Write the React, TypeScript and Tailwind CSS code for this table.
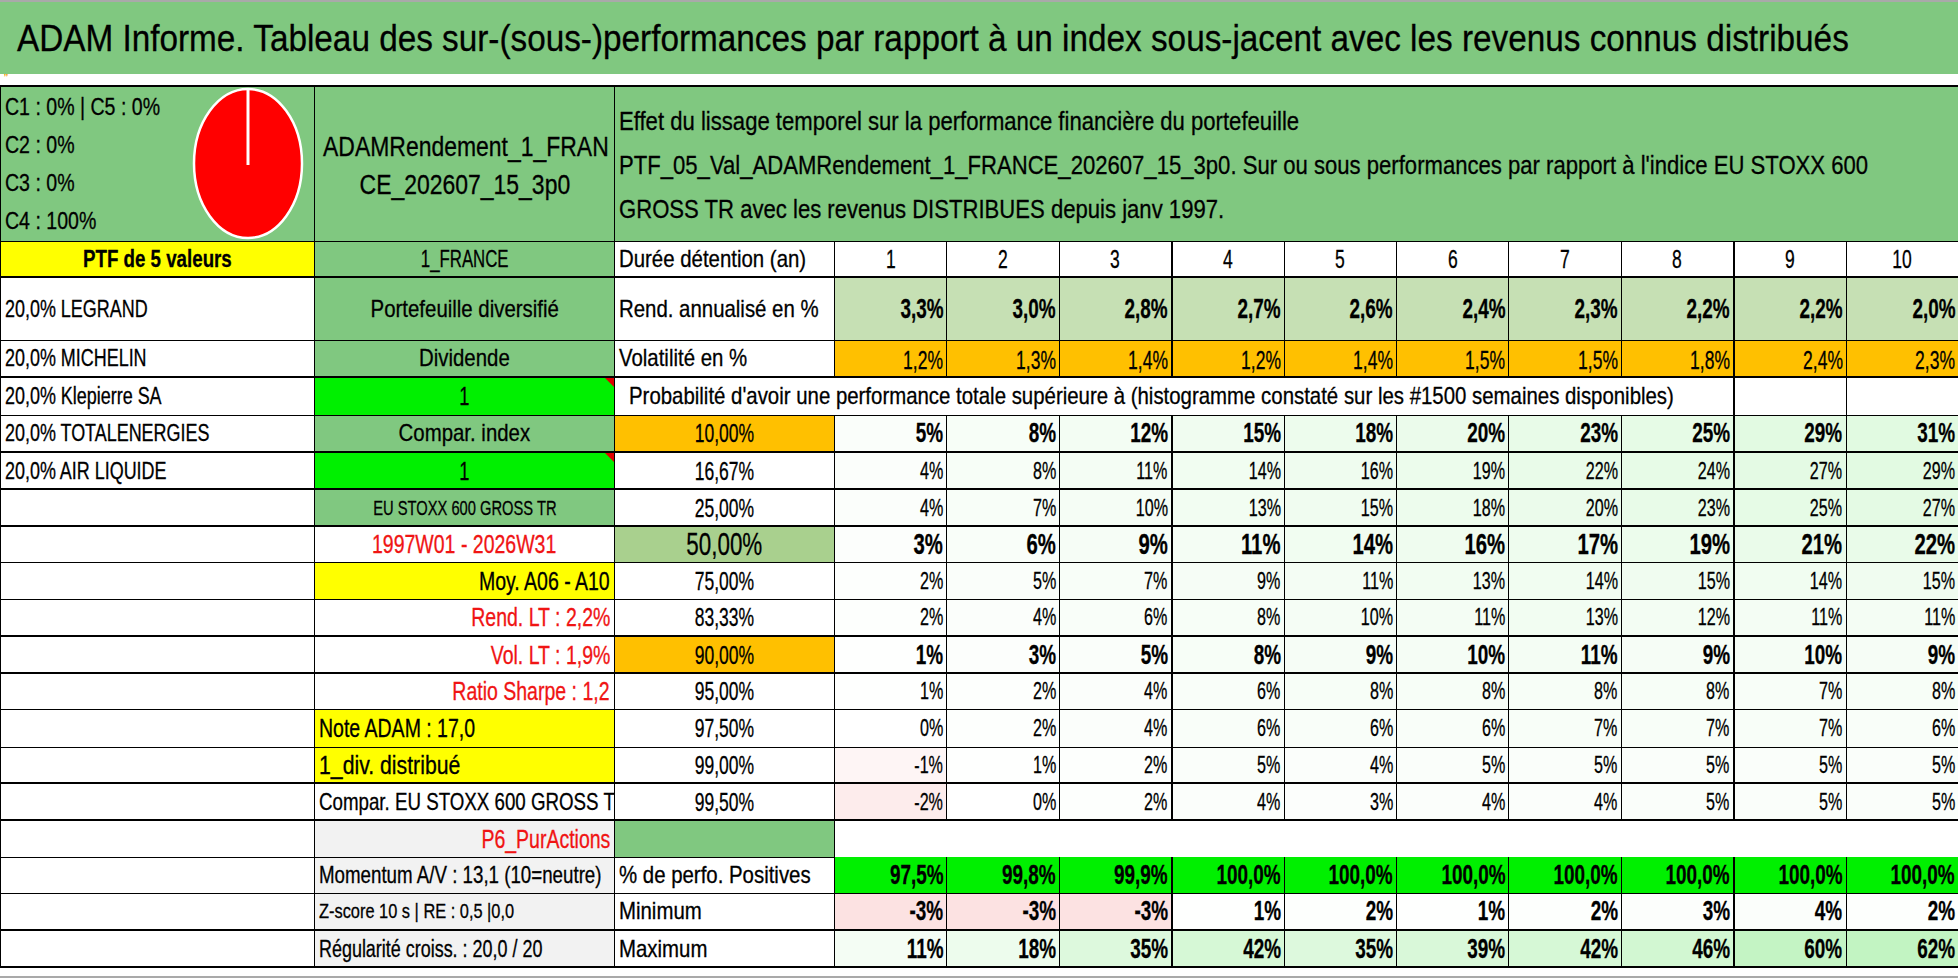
import React from "react";

const FONT = "[font-family:'Liberation_Sans','Arial',sans-serif]";

type Align = "l" | "c" | "r";
type Squeeze = "n" | "m" | "t" | "w";
const ALIGN: Record<Align, string> = { l: "text-left", c: "text-center", r: "text-right" };
const ORIGIN: Record<Align, string> = { l: "origin-left", c: "origin-center", r: "origin-right" };
// the sheet uses a narrow face (digits even narrower): squeeze Liberation Sans sideways
const SQUEEZE: Record<Squeeze, string> = {
  n: "scale-x-[0.7]",
  m: "scale-x-[0.78]",
  t: "scale-x-[0.85]",
  w: "scale-x-[0.9]",
};

function Txt({ align = "l", sc = "t", children }: { align?: Align; sc?: Squeeze; children?: React.ReactNode }) {
  return <span className={`inline-block ${SQUEEZE[sc]} ${ORIGIN[align]}`}>{children}</span>;
}

// colour scale used by the sheet's conditional formatting
function mix(t: number, to: number[]) {
  const c = to.map((v) => Math.round(255 + (v - 255) * t));
  return `rgb(${c[0]}, ${c[1]}, ${c[2]})`;
}

function scaleBg(v: number) {
  if (v < 0) return mix(Math.min(1, -v / 3), [252, 226, 226]);
  return mix(Math.min(1, v / 62), [194, 244, 194]);
}

interface TdProps {
  className?: string;
  inner?: string;
  align?: Align;
  sc?: Squeeze;
  colSpan?: number;
  flag?: boolean;
  style?: React.CSSProperties;
  children?: React.ReactNode;
}

function Td({ className = "", inner = "", align = "l", sc = "t", colSpan, flag, style, children }: TdProps) {
  return (
    <td colSpan={colSpan} style={style} className={`relative border border-black p-0 align-middle ${className}`}>
      {flag && <span className="absolute right-0 top-0 h-[9px] w-[9px] bg-[#e00000] [clip-path:polygon(0_0,100%_0,100%_100%)]" />}
      <div className={`overflow-hidden whitespace-nowrap px-[4px] leading-[30px] ${ALIGN[align]} ${inner}`}>
        {children !== undefined && (
          <Txt align={align} sc={sc}>
            {children}
          </Txt>
        )}
      </div>
    </td>
  );
}

const sep = (i: number) => (i === 3 || i === 8 ? "border-l-2" : "");

function ValueCells({ vals, weight, thick }: { vals: number[]; weight: string; thick?: boolean }) {
  return (
    <>
      {vals.map((v, i) => (
        <Td
          key={i}
          align="r"
          sc="n"
          style={{ backgroundColor: scaleBg(v) }}
          className={`${sep(i)} ${thick ? "border-b-2" : ""}`}
          inner={`pr-[3px] ${weight}`}
        >
          {`${v}%`}
        </Td>
      ))}
    </>
  );
}

interface ProbRow {
  h: string;
  thick?: boolean;
  a?: string;
  b: string;
  bCls: string;
  bInner: string;
  bAlign: Align;
  bSc: Squeeze;
  flag?: boolean;
  c: string;
  cCls?: string;
  cInner?: string;
  vals: number[];
  weight: string;
}

const GREEN = "bg-[#80c880]";
const BRIGHT = "bg-[#00f000]";
const YELLOW = "bg-[#ffff00]";
const ORANGE = "bg-[#ffc000]";
const RED = "text-[#f01414]";
const NORMAL = "text-[23px]";
const BOLD = "font-bold text-[27px]";

const probRows: ProbRow[] = [
  { h: "h-[37px]", thick: true, a: "20,0% TOTALENERGIES", b: "Compar. index", bCls: GREEN, bInner: "text-[24px]", bAlign: "c", bSc: "t", c: "10,00%", cCls: ORANGE, vals: [5, 8, 12, 15, 18, 20, 23, 25, 29, 31], weight: BOLD },
  { h: "h-[37px]", thick: true, a: "20,0% AIR LIQUIDE", b: "1", bCls: BRIGHT, bInner: "text-[26px]", bAlign: "c", bSc: "n", flag: true, c: "16,67%", vals: [4, 8, 11, 14, 16, 19, 22, 24, 27, 29], weight: NORMAL },
  { h: "h-[37px]", thick: true, b: "EU STOXX 600 GROSS TR", bCls: GREEN, bInner: "text-[21px]", bAlign: "c", bSc: "n", c: "25,00%", vals: [4, 7, 10, 13, 15, 18, 20, 23, 25, 27], weight: NORMAL },
  { h: "h-[36px]", b: "1997W01 - 2026W31", bCls: "", bInner: `text-[25px] ${RED}`, bAlign: "c", bSc: "m", c: "50,00%", cCls: "bg-[#a9d08e]", cInner: "text-[32px]", vals: [3, 6, 9, 11, 14, 16, 17, 19, 21, 22], weight: "font-bold text-[29px]" },
  { h: "h-[37px]", b: "Moy. A06 - A10", bCls: YELLOW, bInner: "text-[25px]", bAlign: "r", bSc: "m", c: "75,00%", vals: [2, 5, 7, 9, 11, 13, 14, 15, 14, 15], weight: NORMAL },
  { h: "h-[37px]", thick: true, b: "Rend. LT : 2,2%", bCls: "", bInner: `text-[25px] ${RED}`, bAlign: "r", bSc: "m", c: "83,33%", vals: [2, 4, 6, 8, 10, 11, 13, 12, 11, 11], weight: NORMAL },
  { h: "h-[37px]", thick: true, b: "Vol. LT : 1,9%", bCls: "", bInner: `text-[25px] ${RED}`, bAlign: "r", bSc: "m", c: "90,00%", cCls: ORANGE, vals: [1, 3, 5, 8, 9, 10, 11, 9, 10, 9], weight: BOLD },
  { h: "h-[36px]", b: "Ratio Sharpe : 1,2", bCls: "", bInner: `text-[25px] ${RED}`, bAlign: "r", bSc: "m", c: "95,00%", vals: [1, 2, 4, 6, 8, 8, 8, 8, 7, 8], weight: NORMAL },
  { h: "h-[38px]", b: "Note ADAM : 17,0", bCls: YELLOW, bInner: "text-[25px]", bAlign: "l", bSc: "m", c: "97,50%", vals: [0, 2, 4, 6, 6, 6, 7, 7, 7, 6], weight: NORMAL },
  { h: "h-[36px]", thick: true, b: "1_div. distribué", bCls: YELLOW, bInner: "text-[25px]", bAlign: "l", bSc: "t", c: "99,00%", vals: [-1, 1, 2, 5, 4, 5, 5, 5, 5, 5], weight: NORMAL },
  { h: "h-[37px]", thick: true, b: "Compar. EU STOXX 600 GROSS TR", bCls: "", bInner: "text-[24px]", bAlign: "l", bSc: "m", c: "99,50%", vals: [-2, 0, 2, 4, 3, 4, 4, 5, 5, 5], weight: NORMAL },
];

const rend = ["3,3%", "3,0%", "2,8%", "2,7%", "2,6%", "2,4%", "2,3%", "2,2%", "2,2%", "2,0%"];
const vol = ["1,2%", "1,3%", "1,4%", "1,2%", "1,4%", "1,5%", "1,5%", "1,8%", "2,4%", "2,3%"];
const positives = ["97,5%", "99,8%", "99,9%", "100,0%", "100,0%", "100,0%", "100,0%", "100,0%", "100,0%", "100,0%"];
const minimum = [-3, -3, -3, 1, 2, 1, 2, 3, 4, 2];
const maximum = [11, 18, 35, 42, 35, 39, 42, 46, 60, 62];
const cols = [1, 2, 3, 4, 5, 6, 7, 8, 9, 10];

function Pie() {
  return (
    <svg width="112" height="153" viewBox="0 0 112 153">
      <ellipse cx="56" cy="76.5" rx="54" ry="74.5" fill="#ff0000" stroke="#ffffff" strokeWidth="2.5" />
      <line x1="56" y1="2" x2="56" y2="78" stroke="#ffffff" strokeWidth="3" />
    </svg>
  );
}

export default function App() {
  return (
    <div className={`${FONT} relative h-[979px] w-[1958px] overflow-hidden bg-white text-black [-webkit-text-stroke:0.3px_currentColor]`}>
      <div className="flex h-[74px] items-center whitespace-nowrap border-t-2 border-[#a9a9a9] bg-[#80c880] pl-[17px] text-[37px] leading-none">
        <Txt sc="w">ADAM Informe. Tableau des sur-(sous-)performances par rapport à un index sous-jacent avec les revenus connus distribués</Txt>
      </div>
      <div className="h-[11px] pl-[4px] text-[9px] leading-[8px] text-[#f0a000]">ʼʼ</div>

      <table className="w-[1958px] table-fixed border-collapse">
        <colgroup>
          <col className="w-[314px]" />
          <col className="w-[300px]" />
          <col className="w-[220px]" />
          {cols.map((c) => (
            <col key={c} className="w-[112.4px]" />
          ))}
        </colgroup>
        <tbody>
          {/* header */}
          <tr className="h-[155px]">
            <td className={`border border-t-2 border-black p-0 align-top ${GREEN}`}>
              <div className="flex h-[153px] items-center">
                <div className="w-[191px] whitespace-nowrap pl-[4px] pt-[1px] text-[23px] leading-[38px]">
                  <div><Txt>C1 : 0% | C5 : 0%</Txt></div>
                  <div><Txt>C2 : 0%</Txt></div>
                  <div><Txt>C3 : 0%</Txt></div>
                  <div><Txt>C4 : 100%</Txt></div>
                </div>
                <Pie />
              </div>
            </td>
            <td className={`border border-t-2 border-black p-0 text-[27px] leading-[38px] whitespace-nowrap ${GREEN}`}>
              <div className="pl-[8px] pt-[4px]"><Txt>ADAMRendement_1_FRAN</Txt></div>
              <div className="text-center"><Txt align="c">CE_202607_15_3p0</Txt></div>
            </td>
            <td colSpan={11} className={`border border-t-2 border-black p-0 pl-[4px] pt-[2px] text-[26px] leading-[44px] whitespace-nowrap ${GREEN}`}>
              <div><Txt>Effet du lissage temporel sur la performance financière du portefeuille</Txt></div>
              <div><Txt>PTF_05_Val_ADAMRendement_1_FRANCE_202607_15_3p0. Sur ou sous performances par rapport à l'indice EU STOXX 600</Txt></div>
              <div><Txt>GROSS TR avec les revenus DISTRIBUES depuis janv 1997.</Txt></div>
            </td>
          </tr>

          {/* durée */}
          <tr className="h-[36px]">
            <Td className={`border-b-2 ${YELLOW}`} align="c" sc="m" inner="font-bold text-[24px]">PTF de 5 valeurs</Td>
            <Td className={`border-b-2 ${GREEN}`} align="c" sc="n" inner="text-[24px]">1_FRANCE</Td>
            <Td className="border-b-2" inner="text-[24px]">Durée détention (an)</Td>
            {cols.map((c, i) => (
              <Td key={c} className={`border-b-2 ${sep(i)}`} align="c" sc="n" inner="text-[25px]">
                {c}
              </Td>
            ))}
          </tr>

          {/* rendement */}
          <tr className="h-[63px]">
            <Td sc="m" inner="text-[23px]">20,0% LEGRAND</Td>
            <Td className={GREEN} align="c" inner="text-[24px]">Portefeuille diversifié</Td>
            <Td inner="text-[24px]">Rend. annualisé en %</Td>
            {rend.map((v, i) => (
              <Td key={i} className={`bg-[#c6e0b4] ${sep(i)}`} align="r" sc="n" inner={`pr-[3px] ${BOLD}`}>
                {v}
              </Td>
            ))}
          </tr>

          {/* volatilité */}
          <tr className="h-[37px]">
            <Td className="border-b-2" sc="m" inner="text-[23px]">20,0% MICHELIN</Td>
            <Td className={`border-b-2 ${GREEN}`} align="c" inner="text-[24px]">Dividende</Td>
            <Td className="border-b-2" inner="text-[24px]">Volatilité en %</Td>
            {vol.map((v, i) => (
              <Td key={i} className={`border-b-2 ${ORANGE} ${sep(i)}`} align="r" sc="n" inner="pr-[3px] pt-[3px] text-[25px]">
                {v}
              </Td>
            ))}
          </tr>

          {/* probabilité */}
          <tr className="h-[38px]">
            <Td sc="m" inner="text-[23px]">20,0% Klepierre SA</Td>
            <Td className={BRIGHT} flag align="c" sc="n" inner="text-[26px]">1</Td>
            <Td colSpan={9} inner="pl-[14px] text-[24px]">
              Probabilité d'avoir une performance totale supérieure à (histogramme constaté sur les #1500 semaines disponibles)
            </Td>
            <Td className="border-l-2" />
            <Td />
          </tr>

          {probRows.map((r, k) => (
            <tr key={k} className={r.h}>
              <Td className={r.thick ? "border-b-2" : ""} sc="m" inner="text-[23px]">{r.a}</Td>
              <Td className={`${r.bCls} ${r.thick ? "border-b-2" : ""}`} flag={r.flag} align={r.bAlign} sc={r.bSc} inner={r.bInner}>
                {r.b}
              </Td>
              <Td className={`${r.cCls ?? ""} ${r.thick ? "border-b-2" : ""}`} align="c" sc="n" inner={r.cInner ?? "text-[25px]"}>
                {r.c}
              </Td>
              <ValueCells vals={r.vals} weight={r.weight} thick={r.thick} />
            </tr>
          ))}

          {/* P6 */}
          <tr className="h-[37px]">
            <Td />
            <Td className="bg-[#f2f2f2]" align="r" sc="m" inner={`text-[25px] ${RED}`}>P6_PurActions</Td>
            <Td className={GREEN} />
            <td colSpan={10} className="border-0 border-t-2 border-black p-0" />
          </tr>

          {/* positives */}
          <tr className="h-[36px]">
            <Td />
            <Td className="bg-[#f2f2f2]" sc="m" inner="text-[24px]">Momentum A/V : 13,1 (10=neutre)</Td>
            <Td inner="text-[24px]">% de perfo. Positives</Td>
            {positives.map((v, i) => (
              <Td key={i} className={`border-t-0 ${BRIGHT} ${sep(i)}`} align="r" sc="n" inner={`pr-[3px] ${BOLD}`}>
                {v}
              </Td>
            ))}
          </tr>

          {/* minimum */}
          <tr className="h-[37px]">
            <Td className="border-b-2" />
            <Td className="border-b-2 bg-[#f2f2f2]" sc="m" inner="text-[21px]">Z-score 10 s | RE : 0,5 |0,0</Td>
            <Td className="border-b-2" inner="text-[24px]">Minimum</Td>
            <ValueCells vals={minimum} weight={BOLD} thick />
          </tr>

          {/* maximum */}
          <tr className="h-[37px]">
            <Td className="border-b-2" />
            <Td className="border-b-2 bg-[#f2f2f2]" sc="m" inner="text-[23px]">Régularité croiss. : 20,0 / 20</Td>
            <Td className="border-b-2" inner="text-[24px]">Maximum</Td>
            <ValueCells vals={maximum} weight={BOLD} thick />
          </tr>
        </tbody>
      </table>
      <div className="h-[10px] border-b-2 border-[#a9a9a9]" />
    </div>
  );
}
